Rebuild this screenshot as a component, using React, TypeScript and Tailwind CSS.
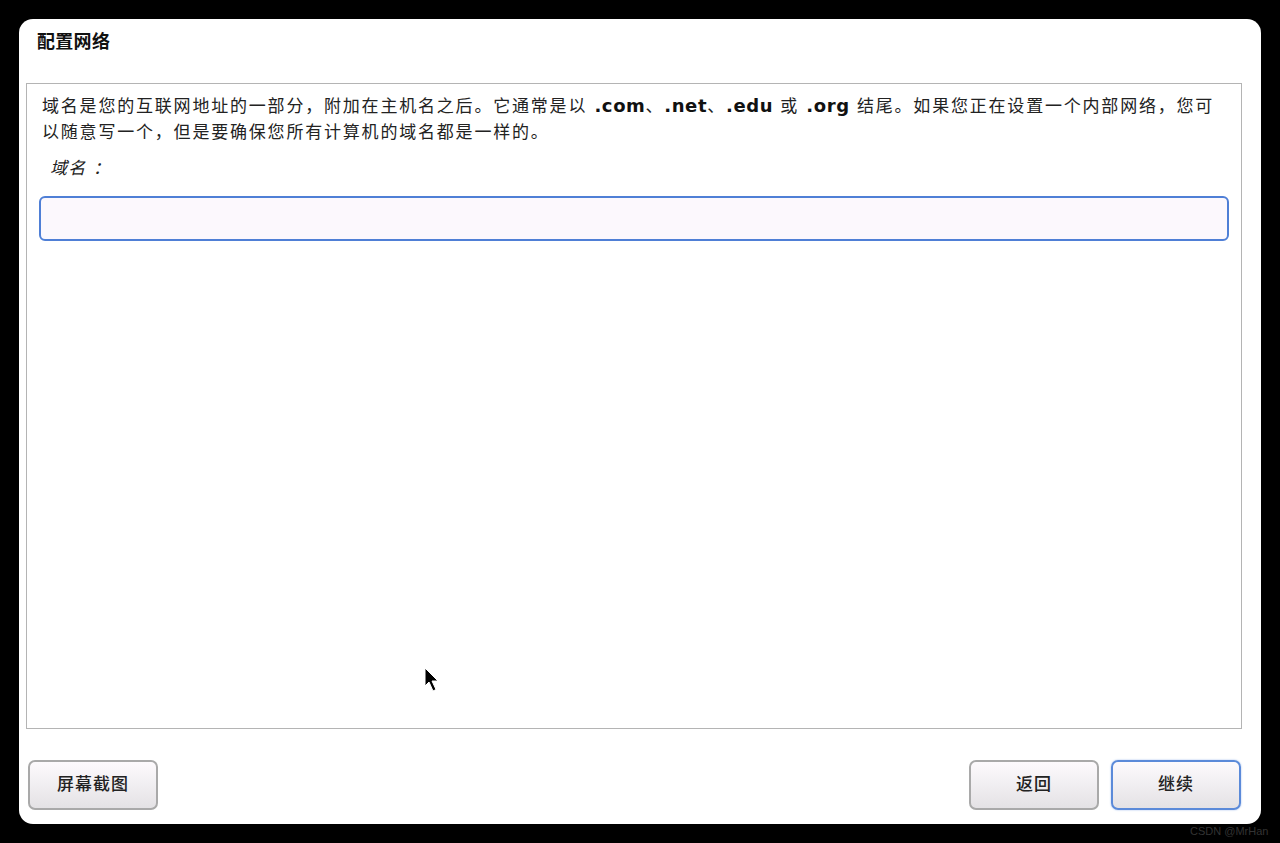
import React from "react";

const FONT = '"DejaVu Sans", "Noto Sans CJK SC", sans-serif';

function Btn({ label, primary }: { label: string; primary?: boolean }) {
  return (
    <button
      className={
        "h-[50px] w-[130px] rounded-[7px] bg-gradient-to-b from-[#fdfafd] to-[#e4e2e5] text-[17px] font-medium text-[#222] tracking-[1px] " +
        (primary
          ? "border-2 border-[#5b8ad9] shadow-[0_0_2px_#9bb8ea]"
          : "border-2 border-[#a9a9a9]")
      }
      style={{ fontFamily: FONT }}
    >
      {label}
    </button>
  );
}

export default function App() {
  return (
    <div
      className="relative h-[843px] w-[1280px] bg-black p-[19px]"
      style={{ fontFamily: FONT }}
    >
      <div className="flex h-full w-full flex-col rounded-[14px] bg-white">
        <div className="h-[64px] pl-[18px] pt-[11px] text-[18px] font-bold leading-[24px] text-[#111] tracking-[0.3px]">
          配置网络
        </div>
        <div className="ml-[7px] mr-[19px] flex h-[646px] flex-col border border-[#b4b4b4] px-[12px] pt-[9px]">
          <p className="pl-[3px] text-[17px] leading-[26px] tracking-[1.8px] text-[#222]">
            域名是您的互联网地址的一部分，附加在主机名之后。它通常是以{" "}
            <b className="text-[18px] tracking-[0.6px] text-[#111]">.com</b>、
            <b className="text-[18px] tracking-[0.6px] text-[#111]">.net</b>、
            <b className="text-[18px] tracking-[0.6px] text-[#111]">.edu</b> 或{" "}
            <b className="text-[18px] tracking-[0.6px] text-[#111]">.org</b>{" "}
            结尾。如果您正在设置一个内部网络，您可
            <br />
            以随意写一个，但是要确保您所有计算机的域名都是一样的。
          </p>
          <div className="mt-[12px] pl-[11px] text-[17px] italic leading-[22px] tracking-[1.2px] text-[#222]">
            域名 ：
          </div>
          <div className="mt-[17px] h-[45px] w-full rounded-[6px] border-2 border-[#4f7fd6] bg-[#fcf8fd]" />
        </div>
        <div className="mt-[31px] flex items-start justify-between pl-[9px] pr-[20px]">
          <Btn label="屏幕截图" />
          <div className="flex gap-[12px]">
            <Btn label="返回" />
            <Btn label="继续" primary />
          </div>
        </div>
      </div>
      <svg
        className="absolute left-[424px] top-[667px]"
        width="16"
        height="26"
        viewBox="0 0 16 26"
      >
        <path
          d="M1 1 L1 19 L5 15 L9 24 L12 22.5 L8 14 L14 14 Z"
          fill="#000"
          stroke="#fff"
          strokeWidth="1"
        />
      </svg>
      <div
        className="absolute left-[1190px] top-[824px] text-[11px] leading-[14px] text-[#333]"
        style={{ fontFamily: '"Liberation Sans", sans-serif' }}
      >
        CSDN @MrHan
      </div>
    </div>
  );
}
